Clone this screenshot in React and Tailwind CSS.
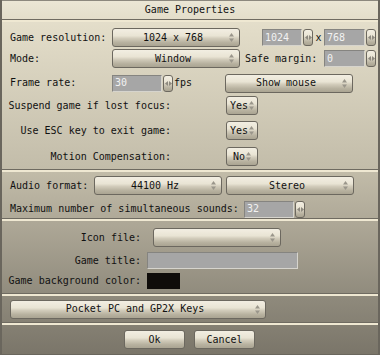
import React from "react";

const btnBg =
  "bg-[linear-gradient(to_bottom,#f2eee2_0%,#e9e4d4_40%,#d2ccbb_55%,#b7b19f_80%,#aaa492_100%)]";

function UpDown() {
  return (
    <svg width="5" height="9" viewBox="0 0 5 9" className="shrink-0">
      <path d="M2.5 0 L5 3.5 L0 3.5 Z" fill="#9a968b" />
      <path d="M0 5.5 L5 5.5 L2.5 9 Z" fill="#9a968b" />
    </svg>
  );
}

function Dropdown({ w, children }) {
  return (
    <div
      className={`${w} h-[19px] shrink-0 rounded-[3px] border border-[#6c685f] ${btnBg} flex items-center pl-[4px] pr-[5px]`}
    >
      <span className="flex-1 text-center">{children}</span>
      <UpDown />
    </div>
  );
}

function Toggle({ children }) {
  return (
    <div
      className={`w-[32px] h-[19px] shrink-0 rounded-[3px] border border-[#6c685f] ${btnBg} flex items-center justify-center gap-[1px]`}
    >
      <span>{children}</span>
      <UpDown />
    </div>
  );
}

function Spin() {
  return (
    <div
      className={`w-[10px] h-[17px] shrink-0 rounded-[3px] border border-[#6c685f] ${btnBg} flex items-center justify-center`}
    >
      <svg width="7" height="5" viewBox="0 0 7 5">
        <path d="M0 2.5 L3 0 L3 5 Z" fill="#8d897f" />
        <path d="M7 2.5 L4 0 L4 5 Z" fill="#8d897f" />
      </svg>
    </div>
  );
}

function Field({ w, value }) {
  return (
    <div
      className={`${w} h-[17px] shrink-0 bg-[#a6a6a6] border border-t-[#858480] border-l-[#858480] border-b-[#d6d4cd] border-r-[#d6d4cd] text-[#f2f2f2] pl-[2px] flex items-center`}
    >
      {value}
    </div>
  );
}

function Button({ children }) {
  return (
    <div
      className={`w-[61px] h-[19px] rounded-[3px] border border-[#6c685f] ${btnBg} flex items-center justify-center`}
    >
      {children}
    </div>
  );
}

function Sep() {
  return (
    <div className="shrink-0">
      <div className="h-[1px] bg-[#6f6b61]" />
      <div className="h-[2px] bg-[#efe8d2]" />
    </div>
  );
}

export default function App() {
  return (
    <div
      className="w-[380px] h-[355px] overflow-hidden flex flex-col text-[10px] leading-none text-[#111] border-l-2 border-r-2 border-b border-[#6a665d] bg-[linear-gradient(to_bottom,#e9e3d0_0px,#e2dcc8_30px,#c2bca9_170px,#aea897_222px,#8f8a7c_297px,#7a7569_355px)]"
      style={{ fontFamily: '"DejaVu Sans Mono", "Liberation Mono", monospace' }}
    >
      {/* title */}
      <div className="h-[19px] shrink-0 flex items-center justify-center bg-[linear-gradient(to_bottom,#ebe6d5,#e3ddca)] border-t border-[#8c887e]">
        Game Properties
      </div>
      <Sep />

      {/* display section */}
      <div className="h-[147px] shrink-0 flex flex-col">
        <div className="h-[19px] mt-[6px] flex items-center">
          <span className="w-[110px] pl-[8px] shrink-0">Game resolution:</span>
          <Dropdown w="w-[128px]">1024 x 768</Dropdown>
          <div className="w-[22px] shrink-0" />
          <Field w="w-[40px]" value="1024" />
          <div className="w-[1px]" />
          <Spin />
          <span className="w-[11px] text-center">x</span>
          <Field w="w-[41px]" value="768" />
          <div className="w-[1px]" />
          <Spin />
        </div>
        <div className="h-[19px] mt-[2px] flex items-center">
          <span className="w-[110px] pl-[8px] shrink-0">Mode:</span>
          <Dropdown w="w-[128px]">Window</Dropdown>
          <span className="w-[84px] pl-[5px] shrink-0">Safe margin:</span>
          <Field w="w-[41px]" value="0" />
          <div className="w-[1px]" />
          <Spin />
        </div>
        <div className="h-[20px] mt-[5px] flex items-center">
          <span className="w-[110px] pl-[8px] shrink-0">Frame rate:</span>
          <Field w="w-[50px]" value="30" />
          <div className="w-[1px]" />
          <Spin />
          <span className="w-[52px] pl-[1px] shrink-0">fps</span>
          <Dropdown w="w-[128px]">Show mouse</Dropdown>
        </div>
        <div className="h-[19px] mt-[3px] flex items-center">
          <span className="w-[169px] text-right shrink-0">Suspend game if lost focus:</span>
          <div className="w-[55px] shrink-0" />
          <Toggle>Yes</Toggle>
        </div>
        <div className="h-[19px] mt-[6px] flex items-center">
          <span className="w-[169px] text-right shrink-0">Use ESC key to exit game:</span>
          <div className="w-[55px] shrink-0" />
          <Toggle>Yes</Toggle>
        </div>
        <div className="h-[19px] mt-[7px] flex items-center">
          <span className="w-[169px] text-right shrink-0">Motion Compensation:</span>
          <div className="w-[55px] shrink-0" />
          <Toggle>No</Toggle>
        </div>
      </div>
      <Sep />

      {/* audio */}
      <div className="h-[46px] shrink-0 flex flex-col">
        <div className="h-[19px] mt-[4px] flex items-center">
          <span className="w-[92px] pl-[8px] shrink-0">Audio format:</span>
          <Dropdown w="w-[128px]">44100 Hz</Dropdown>
          <div className="w-[4px] shrink-0" />
          <Dropdown w="w-[128px]">Stereo</Dropdown>
        </div>
        <div className="h-[18px] mt-[5px] flex items-center">
          <span className="w-[242px] pl-[8px] shrink-0">Maximum number of simultaneous sounds:</span>
          <Field w="w-[50px]" value="32" />
          <div className="w-[1px]" />
          <Spin />
        </div>
      </div>
      <Sep />

      {/* misc */}
      <div className="h-[72px] shrink-0 flex flex-col">
        <div className="h-[19px] mt-[7px] flex items-center">
          <span className="w-[139px] text-right shrink-0">Icon file:</span>
          <div className="w-[12px] shrink-0" />
          <Dropdown w="w-[128px]"></Dropdown>
        </div>
        <div className="h-[17px] mt-[5px] flex items-center">
          <span className="w-[139px] text-right shrink-0">Game title:</span>
          <div className="w-[6px] shrink-0" />
          <Field w="w-[151px]" value="" />
        </div>
        <div className="h-[16px] mt-[4px] flex items-center">
          <span className="w-[139px] text-right shrink-0">Game background color:</span>
          <div className="w-[6px] shrink-0" />
          <div className="w-[33px] h-[16px] bg-[#0f0c0a]" />
        </div>
      </div>
      <Sep />

      {/* keys */}
      <div className="h-[26px] shrink-0 flex items-center pl-[8px]">
        <Dropdown w="w-[256px]">Pocket PC and GP2X Keys</Dropdown>
      </div>
      <Sep />

      {/* buttons */}
      <div className="flex-1 flex items-start pt-[5px] pl-[122px] gap-[9px]">
        <Button>Ok</Button>
        <Button>Cancel</Button>
      </div>
    </div>
  );
}
